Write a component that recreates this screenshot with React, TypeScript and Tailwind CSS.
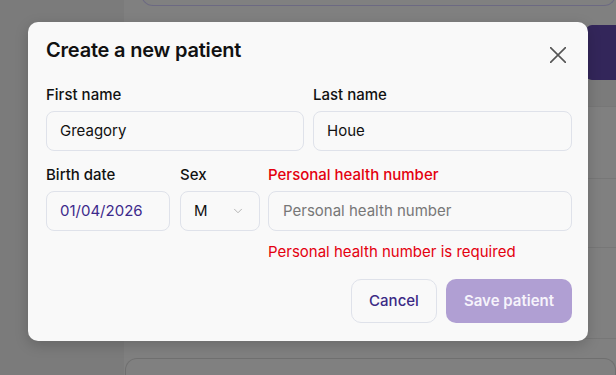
import React from 'react'
import { ChevronDown } from 'lucide-react'

function Background() {
  return (
    <div className="absolute inset-0 flex">
      <div className="w-[124px] h-full bg-[#7b7b7b]" />
      <div className="flex-1 h-full bg-[#808080] flex flex-col">
        <div className="ml-[17px] -mt-4 h-[22px] rounded-b-[12px] border border-[#6c6982] border-t-0" />
        <div className="flex justify-end mt-[19px]">
          <div className="w-[30px] h-[55px] bg-[#33265a] rounded-l-md" />
        </div>
        <div className="h-[26px] bg-[#7b7b7b]" />
        <div className="h-[72px] border-t border-[#777]" />
        <div className="h-[69px] border-t border-[#777]" />
        <div className="h-[91px] border-t border-[#777]" />
        <div className="h-[20px] border-t border-[#777]" />
        <div className="ml-px flex-1 rounded-t-[12px] border border-[#6f6f6f] border-b-0" />
      </div>
    </div>
  )
}

function Label({ children, error }: { children: React.ReactNode; error?: boolean }) {
  return (
    <label className={`block text-[15px] font-medium leading-5 mb-[6px] ${error ? 'text-[#e4000f]' : 'text-[#111]'}`}>
      {children}
    </label>
  )
}

export default function App() {
  return (
    <div
      className="relative w-[616px] h-[375px] overflow-hidden"
      style={{ fontFamily: 'Inter, "Noto Sans", sans-serif' }}
    >
      <Background />
      <div className="absolute left-[28px] top-[22px] w-[560px] h-[319px] rounded-[10px] bg-[#f9f9f9] shadow-[0_4px_14px_rgba(0,0,0,0.18)] pl-[18px] pr-[16px] pt-[16px]">
        <div className="flex items-start justify-between">
          <h2 className="text-[20px] font-semibold text-[#111] leading-6 tracking-[-0.2px]">Create a new patient</h2>
          <svg width="16" height="16" viewBox="0 0 16 16" className="mt-[9px] mr-[6px] text-[#555]">
            <path d="M0.5 0.5L15.5 15.5M15.5 0.5L0.5 15.5" stroke="currentColor" strokeWidth="1.6" strokeLinecap="round" />
          </svg>
        </div>

        <div className="flex gap-[9px] mt-[22px]">
          <div className="w-[258px]">
            <Label>First name</Label>
            <div className="h-[40px] rounded-[8px] border border-[#dfe2ea] bg-[#f9f9f9] px-[13px] flex items-center text-[15px] text-[#111]">
              Greagory
            </div>
          </div>
          <div className="flex-1">
            <Label>Last name</Label>
            <div className="h-[40px] rounded-[8px] border border-[#dfe2ea] bg-[#f9f9f9] px-[13px] flex items-center text-[15px] text-[#111]">
              Houe
            </div>
          </div>
        </div>

        <div className="flex mt-[14px]">
          <div className="w-[124px] mr-[10px]">
            <Label>Birth date</Label>
            <div className="h-[40px] rounded-[8px] border border-[#dfe2ea] px-[13px] flex items-center text-[15px] text-[#3d2a8c]">
              01/04/2026
            </div>
          </div>
          <div className="w-[80px] mr-[8px]">
            <Label>Sex</Label>
            <div className="h-[40px] rounded-[8px] border border-[#dfe2ea] pl-[13px] pr-[14px] flex items-center justify-between text-[15px] text-[#111]">
              <span>M</span>
              <ChevronDown className="w-[14px] h-[14px] text-[#aaa]" strokeWidth={1.5} />
            </div>
          </div>
          <div className="flex-1">
            <Label error>Personal health number</Label>
            <div className="h-[40px] rounded-[8px] border border-[#dfe2ea] px-[14px] flex items-center text-[15px] text-[#777]">
              Personal health number
            </div>
            <p className="mt-[11px] text-[15px] leading-5 text-[#e4000f]">Personal health number is required</p>
          </div>
        </div>

        <div className="flex justify-end gap-[9px] mt-[17px]">
          <button className="h-[44px] w-[86px] rounded-[10px] border border-[#dfe2ea] bg-[#f9f9f9] text-[15px] font-medium text-[#3b2a86]">
            Cancel
          </button>
          <button className="h-[44px] w-[126px] rounded-[10px] bg-[#b09fd3] text-[15px] font-semibold text-[#f6f3fb]">
            Save patient
          </button>
        </div>
      </div>
    </div>
  )
}
